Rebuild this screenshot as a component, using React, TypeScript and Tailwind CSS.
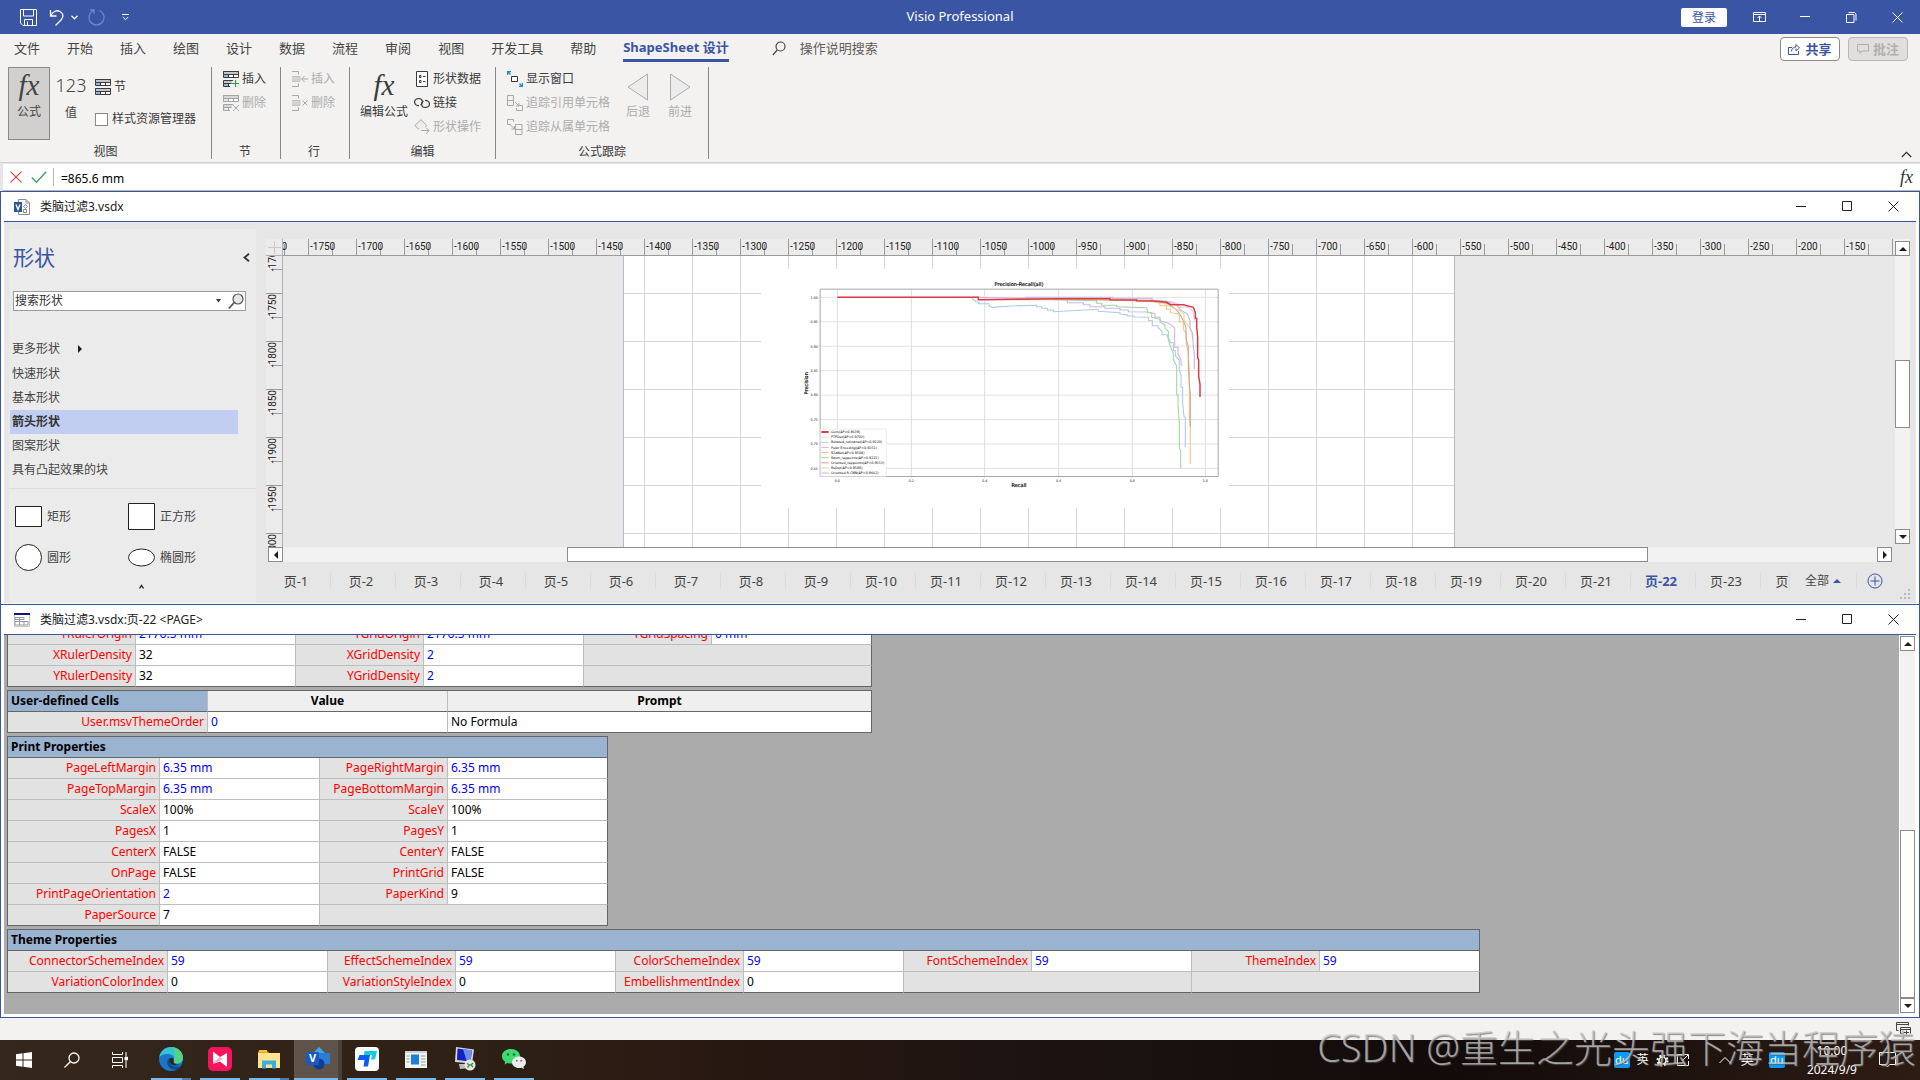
import type { ReactNode } from "react";

const menuTabs = ["文件", "开始", "插入", "绘图", "设计", "数据", "流程", "审阅", "视图", "开发工具", "帮助"];

const stencils = ["快速形状", "基本形状", "箭头形状", "图案形状", "具有凸起效果的块"];

const pages = Array.from({ length: 23 }, (_, i) => `页-${i + 1}`);

const rulerX = Array.from({ length: 34 }, (_, i) => -1800 + i * 50);
const rulerY = [-1700, -1750, -1800, -1850, -1900, -1950, -2000];

type Cell = { name: string; value: string; blue?: boolean } | null;

const rulerGrid: Cell[][] = [
  [
    { name: "YRulerOrigin", value: "2176.5 mm", blue: true },
    { name: "YGridOrigin", value: "2176.5 mm", blue: true },
    { name: "YGridSpacing", value: "0 mm", blue: true },
  ],
  [{ name: "XRulerDensity", value: "32" }, { name: "XGridDensity", value: "2", blue: true }, null],
  [{ name: "YRulerDensity", value: "32" }, { name: "YGridDensity", value: "2", blue: true }, null],
];

const printProps: Cell[][] = [
  [
    { name: "PageLeftMargin", value: "6.35 mm", blue: true },
    { name: "PageRightMargin", value: "6.35 mm", blue: true },
  ],
  [
    { name: "PageTopMargin", value: "6.35 mm", blue: true },
    { name: "PageBottomMargin", value: "6.35 mm", blue: true },
  ],
  [{ name: "ScaleX", value: "100%" }, { name: "ScaleY", value: "100%" }],
  [{ name: "PagesX", value: "1" }, { name: "PagesY", value: "1" }],
  [{ name: "CenterX", value: "FALSE" }, { name: "CenterY", value: "FALSE" }],
  [{ name: "OnPage", value: "FALSE" }, { name: "PrintGrid", value: "FALSE" }],
  [{ name: "PrintPageOrientation", value: "2", blue: true }, { name: "PaperKind", value: "9" }],
  [{ name: "PaperSource", value: "7" }, null],
];

const themeProps: Cell[][] = [
  [
    { name: "ConnectorSchemeIndex", value: "59", blue: true },
    { name: "EffectSchemeIndex", value: "59", blue: true },
    { name: "ColorSchemeIndex", value: "59", blue: true },
    { name: "FontSchemeIndex", value: "59", blue: true },
    { name: "ThemeIndex", value: "59", blue: true },
  ],
  [
    { name: "VariationColorIndex", value: "0" },
    { name: "VariationStyleIndex", value: "0" },
    { name: "EmbellishmentIndex", value: "0" },
    null,
    null,
  ],
];

/* ---------- icons ---------- */

function CloseIcon({ size = 11, className = "" }: { size?: number; className?: string }) {
  return (
    <svg width={size} height={size} viewBox="0 0 11 11" className={className} fill="none" stroke="currentColor">
      <path d="M.5 .5l10 10M10.5 .5l-10 10" />
    </svg>
  );
}

function SectionIcon({ mark }: { mark?: "add" | "remove" }) {
  const off = mark === "remove";
  const line = off ? "#a3a3a3" : "#3b3b3b";
  const head = off ? "#d6d6d6" : "#c8c6c4";
  const blue = off ? "#e8e8e8" : "#83beec";
  return (
    <svg width="16" height="16" viewBox="0 0 16 16" fill="none" stroke={line}>
      <path d="M.5 .5h15v6H.5z" fill="#fff" />
      <path d="M.5 .5h15v3H.5z" fill={head} />
      <path d="M1 4h4v2H1z" fill={blue} stroke="none" />
      <path d="M5.500 4v2.500M10.500 4v2.500" />
      {mark ? (
        <>
          <path d="M10 9.500H.5v3h8M.5 12.500v3H7M5.500 12.500v3" />
          <path d="M1 10h8v2H1z" fill={head} stroke="none" />
          <path d="M1 13h4v2H1z" fill={blue} stroke="none" />
        </>
      ) : (
        <>
          <path d="M.5 9.500h15v6H.5z" fill="#fff" />
          <path d="M.5 9.500h15v3H.5z" fill={head} />
          <path d="M1 13h4v2H1z" fill={blue} stroke="none" />
          <path d="M5.500 13v2.500M10.500 13v2.500" />
        </>
      )}
      {mark === "add" && <path d="M12.500 9v7M9 12.500h7" stroke="#2f9e4f" strokeWidth="1.200" />}
      {mark === "remove" && <path d="M10 10l6 6M16 10l-6 6" stroke="#a8a8a8" />}
    </svg>
  );
}

function RowIcon({ remove }: { remove?: boolean }) {
  return (
    <svg width="16" height="16" viewBox="0 0 16 16" fill="none" stroke="#a8a8a8">
      <path d="M0 .5h6.500v3M0 15.500h6.500v-3M0 8H8" />
      <path d="M0 5.500h8v5H0" fill="#d4d4d4" stroke="#c2c2c2" />
      {remove ? <path d="M10.500 5.500l5 5M15.500 5.500l-5 5" /> : <path d="M16 8h-6M12.500 5L9.500 8l3 3" />}
    </svg>
  );
}

function ShapeDataIcon() {
  return (
    <svg width="16" height="16" viewBox="0 0 16 16" fill="none" stroke="#3b3b3b">
      <path d="M2.500 .5h11v15h-11z" fill="#fff" />
      <path d="M5.500 4.500h1.500v2H5.500zM5.500 9.500h1.500v2H5.500zM9 5.500h2.500M9 10.500h2.500" />
    </svg>
  );
}

function LinkIcon() {
  return (
    <svg width="16" height="12" viewBox="0 0 16 12" fill="none" stroke="#3b3b3b" strokeWidth="1.200">
      <path d="M5 8.500A4 3.500 0 1 1 8.500 4.500c0 2-1 3-2 3.500" />
      <path d="M11 3.500A4 3.500 0 1 1 7.500 7.500c0-2 1-3 2-3.500" />
    </svg>
  );
}

function ShapeOpIcon() {
  return (
    <svg width="16" height="16" viewBox="0 0 16 16" fill="none" stroke="#a8a8a8">
      <path d="M5 10.500L.8 6.500l6-5.800 6 5.800-1.500 1.500" fill="#ececec" />
      <path d="M7 11.500h8M12 8.500l3 3-3 3.500" />
    </svg>
  );
}

function TraceWindowIcon() {
  return (
    <svg width="16" height="16" viewBox="0 0 16 16" fill="none">
      <path d="M4.500 5.500h6v5h-6z" fill="#fff" stroke="#333" />
      <path d="M.5 4V.5H4M.5 .5l3 3M15.500 12v3.500H12M15.500 15.500l-3-3" stroke="#1e8ad0" strokeWidth="1.300" />
    </svg>
  );
}

function TraceIcon({ dependents }: { dependents?: boolean }) {
  return (
    <svg width="16" height="16" viewBox="0 0 16 16" fill="none" stroke="#a8a8a8">
      {dependents ? (
        <path d="M4 5.500H.5v-5h6V3M8.500 5.500h6.500v10H8.500zM8.500 10.500H15M3.500 6l4 4M7.500 7v3h-3" />
      ) : (
        <path d="M.5 .5h6v10h-6zM.5 5.500h6M12 10.500h3.500v5h-6V13M8 7l4 4M12 8v3H9" />
      )}
    </svg>
  );
}

function Caret({ dir, color = "#1e1e1e" }: { dir: "up" | "down" | "left" | "right"; color?: string }) {
  const d = {
    up: "M0 6h8L4 2z",
    down: "M0 2h8L4 6z",
    left: "M6 0v8L2 4z",
    right: "M2 0v8l4-4z",
  }[dir];
  return (
    <svg width="8" height="8" viewBox="0 0 8 8">
      <path d={d} fill={color} />
    </svg>
  );
}

/* ---------- ribbon ---------- */

function SmallButton({ icon, label, disabled }: { icon: ReactNode; label: string; disabled?: boolean }) {
  return (
    <button disabled={disabled} className="flex h-6 items-center gap-[3px] text-xs text-[#3b3b3b] disabled:text-[#acacac]">
      <span className="flex w-4 justify-center">{icon}</span>
      <span>{label}</span>
    </button>
  );
}

function RibbonGroup({ title, className, children }: { title: string; className: string; children: ReactNode }) {
  return (
    <section className={`flex h-[92px] flex-col border-r border-[#8a8886] ${className}`}>
      <div className="flex flex-1 items-start">{children}</div>
      <h2 className="text-center text-xs leading-[15px] text-[#3b3b3b]">{title}</h2>
    </section>
  );
}

function TitleBar() {
  return (
    <header className="flex h-[34px] items-center bg-[#3955a3] text-white">
      <div className="flex flex-1 items-center pl-5">
        <button aria-label="保存">
          <svg width="17" height="17" viewBox="0 0 17 17" fill="none" stroke="#fff">
            <path d="M.5 .5h16v16H3l-2.500-2.500zM3.500 .5v6.500h10V.5M4.500 16.500v-6h8v6M7.500 16v-3.500" />
          </svg>
        </button>
        <button aria-label="撤消" className="ml-3 flex items-center gap-1.5">
          <svg width="16" height="17" viewBox="0 0 16 17" fill="none" stroke="#fff" strokeWidth="1.300">
            <path d="M1.500 1v6h6M1.500 7C4 2 8 .8 11 2.500s4 5 1.500 8L6.500 16.500" />
          </svg>
          <svg width="7" height="5" viewBox="0 0 7 5" fill="none" stroke="#fff" strokeWidth="1.300">
            <path d="M.5 .8l3 3 3-3" />
          </svg>
        </button>
        <button aria-label="恢复" disabled className="ml-[10px]">
          <svg width="17" height="17" viewBox="0 0 17 17" fill="none" stroke="#6f86c9" strokeWidth="1.300">
            <path d="M2 1h4v4M5.500 1.500a7.500 7.500 0 1 0 6 0" />
          </svg>
        </button>
        <button aria-label="自定义快速访问工具栏" className="ml-[17px]">
          <svg width="7" height="7" viewBox="0 0 7 7" fill="none" stroke="#fff">
            <path d="M0 .5h7M.8 3l2.700 2.700L6.200 3" />
          </svg>
        </button>
      </div>
      <h1 className="mr-5 text-[13px]">Visio Professional</h1>
      <div className="flex flex-1 items-center justify-end">
        <button className="mr-[9px] h-[19px] w-[46px] rounded-xs bg-white text-xs leading-[19px] text-[#3955a3]">登录</button>
        <button aria-label="功能区显示选项" className="flex w-[46px] justify-center">
          <svg width="13" height="10" viewBox="0 0 13 10" fill="none" stroke="#fff">
            <path d="M.5 .5h12v9H.5zM.5 2.500h12M6.500 9V4M4.500 6l2-2 2 2" />
          </svg>
        </button>
        <button aria-label="最小化" className="flex w-[46px] justify-center">
          <svg width="10" height="2" viewBox="0 0 10 2">
            <path d="M0 0h10v1H0z" fill="#fff" />
          </svg>
        </button>
        <button aria-label="还原" className="flex w-[46px] justify-center">
          <svg width="11" height="11" viewBox="0 0 11 11" fill="none" stroke="#fff">
            <path d="M.5 2.500h7.500v8H.5zM2.500 .5h6l1.500 1.500v6.500" />
          </svg>
        </button>
        <button aria-label="关闭" className="flex w-[46px] justify-center">
          <CloseIcon />
        </button>
      </div>
    </header>
  );
}

function Ribbon() {
  return (
    <div className="border-b border-[#d2d0ce] bg-[#f3f2f1]">
      <nav className="flex h-[33px] items-start pl-[14px] pr-3 text-[13px] leading-[27px] text-[#444]">
        <div className="flex gap-[27px]">
          {menuTabs.map((tab) => (
            <button key={tab}>{tab}</button>
          ))}
          <button className="h-7 border-b-3 border-[#3955a3] font-bold text-[#3955a3]">ShapeSheet 设计</button>
        </div>
        <label className="ml-[43px] flex items-center gap-[14px] pt-px">
          <svg width="14" height="15" viewBox="0 0 14 15" fill="none" stroke="#444" strokeWidth="1.200">
            <circle cx="8.500" cy="5.500" r="4.500" />
            <path d="M5.200 9L.8 14" />
          </svg>
          <input className="w-40 placeholder:text-[#605e5c]" placeholder="操作说明搜索" />
        </label>
        <div className="ml-auto flex gap-2 pt-[3px] font-bold">
          <button className="flex h-6 w-[60px] items-center justify-center gap-1 rounded-sm border border-[#8a8886] bg-white text-[#3955a3]">
            <svg width="13" height="12" viewBox="0 0 13 12" fill="none" stroke="#3955a3">
              <path d="M4 4.500H.5v7h10V8M3.500 8.500c0-3 2-4.500 4.500-4.500V1.500L11.500 5 8 8V5.500" />
            </svg>
            共享
          </button>
          <button disabled className="flex h-6 w-[60px] items-center justify-center gap-1 rounded-sm border border-[#b9b7b5] bg-[#e1dfdd] text-[#b1afad]">
            <svg width="12" height="10" viewBox="0 0 12 10" fill="none" stroke="#b1afad">
              <path d="M.5 .5h11v6.500H5L3 9.500V7H.5z" />
            </svg>
            批注
          </button>
        </div>
      </nav>

      <div className="flex h-[95px] items-start">
        <RibbonGroup title="视图" className="w-[212px]">
          <button className="ml-2 flex h-[73px] w-[42px] flex-col items-center border border-[#8a8886] bg-[#d2d0ce] text-xs text-[#444]">
            <span className="h-9 font-['Liberation_Serif',serif] text-[29px] leading-[34px] italic">fx</span>
            <span className="leading-4">公式</span>
          </button>
          <button className="ml-[3px] flex w-9 flex-col items-center text-xs text-[#444]">
            <span className="h-9 text-lg leading-9 font-light">123</span>
            <span className="leading-5">值</span>
          </button>
          <div className="ml-[6px] flex flex-col pt-1">
            <button className="flex h-8 items-center gap-[3px] text-xs text-[#3b3b3b]">
              <SectionIcon />
              节
            </button>
            <label className="flex h-8 items-center gap-1 text-xs text-[#3b3b3b]">
              <input type="checkbox" className="size-[13px] appearance-none border border-[#8a8886] bg-white" />
              样式资源管理器
            </label>
          </div>
        </RibbonGroup>
        <RibbonGroup title="节" className="w-[69px] pl-[11px] pr-[13px]">
          <div>
            <SmallButton icon={<SectionIcon mark="add" />} label="插入" />
            <SmallButton icon={<SectionIcon mark="remove" />} label="删除" disabled />
          </div>
        </RibbonGroup>
        <RibbonGroup title="行" className="w-[69px] pl-[11px] pr-[13px]">
          <div>
            <SmallButton icon={<RowIcon />} label="插入" disabled />
            <SmallButton icon={<RowIcon remove />} label="删除" disabled />
          </div>
        </RibbonGroup>
        <RibbonGroup title="编辑" className="w-[146px]">
          <button className="ml-[9px] flex w-[50px] flex-col items-center text-xs text-[#3b3b3b]">
            <span className="h-9 font-['Liberation_Serif',serif] text-[29px] leading-9 italic">fx</span>
            <span className="leading-[18px]">编辑公式</span>
          </button>
          <div className="ml-[5px]">
            <SmallButton icon={<ShapeDataIcon />} label="形状数据" />
            <SmallButton icon={<LinkIcon />} label="链接" />
            <SmallButton icon={<ShapeOpIcon />} label="形状操作" disabled />
          </div>
        </RibbonGroup>
        <RibbonGroup title="公式跟踪" className="w-[213px]">
          <div className="ml-[11px]">
            <SmallButton icon={<TraceWindowIcon />} label="显示窗口" />
            <SmallButton icon={<TraceIcon />} label="追踪引用单元格" disabled />
            <SmallButton icon={<TraceIcon dependents />} label="追踪从属单元格" disabled />
          </div>
          <button disabled className="ml-[10px] flex w-9 flex-col items-center text-xs text-[#acacac]">
            <svg width="22" height="28" viewBox="0 0 22 28" className="mt-[6px]">
              <path d="M20.500 1v26L1 14z" fill="#ececec" stroke="#acacac" />
            </svg>
            <span className="leading-[22px]">后退</span>
          </button>
          <button disabled className="ml-[6px] flex w-9 flex-col items-center text-xs text-[#acacac]">
            <svg width="22" height="28" viewBox="0 0 22 28" className="mt-[6px]">
              <path d="M1.500 1v26L21 14z" fill="#ececec" stroke="#acacac" />
            </svg>
            <span className="leading-[22px]">前进</span>
          </button>
        </RibbonGroup>
        <button aria-label="折叠功能区" className="ml-auto mr-2 self-end pb-1">
          <svg width="11" height="7" viewBox="0 0 11 7" fill="none" stroke="#333" strokeWidth="1.300">
            <path d="M.8 6l4.700-4.700L10.200 6" />
          </svg>
        </button>
      </div>
    </div>
  );
}

function FormulaBar() {
  return (
    <div className="flex h-[28px] bg-[#e6e6e6] pt-px pl-[3px]">
      <div className="flex flex-1 items-center border-b border-[#b5b5b5] bg-white pl-[7px]">
        <button aria-label="取消">
          <CloseIcon size={12} className="text-[#e03c3c]" />
        </button>
        <button aria-label="输入" className="ml-[9px]">
          <svg width="16" height="12" viewBox="0 0 16 12" fill="none" stroke="#3f9b57" strokeWidth="1.300">
            <path d="M.8 6.500l4.700 4.700L15.200 .8" />
          </svg>
        </button>
        <input
          aria-label="公式"
          defaultValue="=865.6 mm"
          className="ml-[6px] h-[18px] flex-1 border-l border-[#b5b5b5] pt-[2px] pl-[7px] text-xs text-black outline-none"
        />
        <button aria-label="插入函数" className="pr-[7px] font-['Liberation_Serif',serif] text-lg leading-5 text-[#333] italic">
          fx
        </button>
      </div>
    </div>
  );
}

/* ---------- windows ---------- */

function WindowBar({ icon, title }: { icon: ReactNode; title: string }) {
  return (
    <div className="flex h-[30px] shrink-0 items-center border-b border-[#3955a3] bg-white pl-[10px]">
      {icon}
      <h2 className="ml-[10px] text-xs text-[#222]">{title}</h2>
      <div className="ml-auto flex text-[#222]">
        <button aria-label="最小化" className="flex w-[46px] items-center justify-center">
          <svg width="10" height="2" viewBox="0 0 10 2">
            <path d="M0 0h10v1H0z" fill="#222" />
          </svg>
        </button>
        <button aria-label="最大化" className="flex w-[46px] justify-center">
          <svg width="10" height="10" viewBox="0 0 10 10" fill="none" stroke="#222">
            <path d="M.5 .5h9v9h-9z" />
          </svg>
        </button>
        <button aria-label="关闭" className="flex w-[46px] justify-center">
          <CloseIcon />
        </button>
      </div>
    </div>
  );
}

function ScrollButton({ dir }: { dir: "up" | "down" | "left" | "right" }) {
  return (
    <button aria-label={dir} className="flex size-[15px] shrink-0 items-center justify-center border border-[#8c8c8c] bg-white">
      <Caret dir={dir} />
    </button>
  );
}

function ShapesPane() {
  return (
    <aside className="mt-[7px] flex w-[247px] shrink-0 flex-col bg-[#ebebeb] text-xs text-[#444]">
      <div className="flex items-center justify-between pt-[14px] pr-[6px] pl-1">
        <h3 className="text-[21px] leading-7 text-[#3955a3]">形状</h3>
        <button aria-label="最小化形状窗口">
          <svg width="7" height="9" viewBox="0 0 7 9" fill="none" stroke="#333" strokeWidth="1.800">
            <path d="M6 .8L1.500 4.500 6 8.200" />
          </svg>
        </button>
      </div>
      <div className="mt-5 ml-1 flex h-5 w-[233px] items-center border border-[#9b9b9b] bg-white pr-px">
        <input aria-label="搜索形状" defaultValue="搜索形状" className="min-w-0 flex-1 pl-px leading-[18px] text-[#333] outline-none" />
        <svg width="5" height="4" viewBox="0 0 5 4" className="mr-[7px]">
          <path d="M0 0h5L2.500 3.500z" fill="#333" />
        </svg>
        <button aria-label="搜索">
          <svg width="16" height="17" viewBox="0 0 16 17" fill="none" stroke="#555">
            <circle cx="10" cy="6" r="5" fill="#e6e6e6" strokeWidth="1.200" />
            <path d="M6.300 9.500L.8 15.500" strokeWidth="1.800" />
          </svg>
        </button>
      </div>
      <button className="mt-[26px] flex h-6 items-center gap-4 pl-[3px]">
        更多形状
        <Caret dir="right" />
      </button>
      <ul className="mt-px">
        {stencils.map((s) => (
          <li key={s}>
            <button
              className={
                s === "箭头形状"
                  ? "ml-px flex h-6 w-[228px] items-center bg-[#c1cdf1] pl-[2px] font-bold text-[#333]"
                  : "flex h-6 items-center pl-[3px]"
              }
            >
              {s}
            </button>
          </li>
        ))}
      </ul>
      <div className="mt-[6px] grid grid-cols-[113px_1fr] gap-y-3 border-t border-[#dcdcdc] pt-[13px] pl-[6px]">
        <button className="flex h-[29px] items-center gap-[5px]">
          <svg width="27" height="27" viewBox="0 0 27 27" fill="#fff" stroke="#222">
            <path d="M.5 3.500h26v20H.5z" />
          </svg>
          矩形
        </button>
        <button className="flex h-[29px] items-center gap-[5px]">
          <svg width="27" height="27" viewBox="0 0 27 27" fill="#fff" stroke="#222">
            <path d="M.5 .5h26v26H.5z" />
          </svg>
          正方形
        </button>
        <button className="flex h-[29px] items-center gap-[5px]">
          <svg width="27" height="27" viewBox="0 0 27 27" fill="#fff" stroke="#222">
            <circle cx="13.500" cy="13.500" r="13" />
          </svg>
          圆形
        </button>
        <button className="flex h-[29px] items-center gap-[5px]">
          <svg width="27" height="27" viewBox="0 0 27 27" fill="#fff" stroke="#222">
            <ellipse cx="13.500" cy="13.500" rx="13" ry="8.500" />
          </svg>
          椭圆形
        </button>
      </div>
      <svg width="5" height="5" viewBox="0 0 5 5" className="mt-3 ml-[130px]" fill="none" stroke="#222" strokeWidth="1.300">
        <path d="M.5 4.500l2-3 2 3" />
      </svg>
    </aside>
  );
}

const curves = [
  { color: "#f3c9ee", d: "M172 112H600L840 114 1000 115 1060 118 1120 118V121L1180 126 1200 134V142H1225L1240 155V170L1246 185" },
  {
    color: "#a9cde6",
    d: "M578 112V118L586 122V126H596V131H627V137L636 142L690 138 770 136V140H785V145H802V150H820V155L900 151 955 148V154L1020 158V162L1042 164V168H1062V171L1106 172V182H1117V197H1134V203L1146 214V224H1162V230L1170 242V248H1180V272H1186V288L1198 300V330L1203 345V382H1208V430L1212 470 1216 472V560",
  },
  {
    color: "#cdb5e2",
    d: "M578 112L820 117 862 119V128H910V134H930V140H975V145H1020V150H1045V155L1104 156 1125 162V172H1140V182L1165 190 1180 200 1184 206V262H1194V282L1203 300V312L1207 318",
  },
  {
    color: "#f7c18b",
    d: "M597 119L990 119 1110 124 1140 130V137H1160V148H1172V158L1198 162V185H1210V207L1219 222V250L1224 275 1228 330V470L1231 500V612",
  },
  {
    color: "#a2d6a0",
    d: "M820 116V119L950 122V130H965V136H1010V140L1100 143 1104 158H1115V172L1140 178V185L1155 195V205L1165 214V240L1173 265 1180 280V300L1190 318V405H1194V435L1198 490V565L1202 570V625",
  },
  { color: "#cba698", d: "M840 117L1130 124 1165 132 1185 146 1198 160 1212 185 1218 205V235L1225 260V320L1228 375 1231 400V500" },
  { color: "#dcdc8f", d: "M840 116L1110 121 1150 130 1180 144 1200 152 1212 162V182L1225 195 1235 215 1238 238" },
  { color: "#c6b2e0", d: "M734 112H998V115H1116V121L1160 124 1190 134 1200 148 1222 162 1230 182V205L1238 220 1240 260 1243 280V328" },
  {
    color: "#dd3b41",
    width: 4.5,
    d: "M172 112H595V119L700 118 840 116H990V119L1070 120V122L1120 123 1160 127 1172 134 1210 134 1240 142 1246 158V175H1250V202L1253 230V292L1256 300V350L1260 372V411",
  },
];

const legend = [
  ["#dd3b41", "Ours(AP=0.9639)"],
  ["#f3c9ee", "PTPDet(AP=0.9702)"],
  ["#a9cde6", "Rotated_retinanet(AP=0.9120)"],
  ["#cdb5e2", "Polar Encoding(AP=0.9251)"],
  ["#f7c18b", "S2aNet(AP=0.9508)"],
  ["#a2d6a0", "Sasm_reppoints(AP=0.9215)"],
  ["#cba698", "Oriented_reppoints(AP=0.9553)"],
  ["#dcdc8f", "ReDet(AP=0.9588)"],
  ["#c6b2e0", "Oriented R-CNN(AP=0.9662)"],
];

function PrecisionRecallChart() {
  return (
    <svg viewBox="-57 27 1404 717" className="w-full bg-white font-['DejaVu_Sans',sans-serif]" fill="none">
      {[172, 394, 614, 836, 1057, 1276].map((x, i) => (
        <g key={x}>
          <path d={`M${x} 87V655`} stroke="#cfcfcf" strokeWidth="2" />
          <text x={x} y="665" fontSize="10" textAnchor="middle" fill="#111">
            {(i * 0.2).toFixed(1)}
          </text>
        </g>
      ))}
      {["1.00", "0.95", "0.90", "0.85", "0.80", "0.75", "0.70", "0.65"].map((t, i) => (
        <g key={t}>
          <path d={`M116 ${112 + i * 73.3}H1314`} stroke="#dcdcdc" strokeWidth="2.500" />
          <text x="114" y={116 + i * 73.3} fontSize="10" textAnchor="end" fill="#111">
            {t}
          </text>
        </g>
      ))}
      <path d="M120.500 87.500h1194v562h-1194z" stroke="#a8a8a8" strokeWidth="3" />
      {curves.map((c) => (
        <path key={c.d} d={c.d} stroke={c.color} strokeWidth={c.width ?? 3.2} />
      ))}
      <path d="M122 507h197v142H122z" fill="#fff" stroke="#e2e2e2" strokeWidth="2" />
      {legend.map(([color, label], i) => (
        <g key={label}>
          <path d={`M124 ${516 + i * 15.4}h22`} stroke={color} strokeWidth={i === 0 ? 6 : 3} />
          <text x="153" y={519.500 + i * 15.4} fontSize="10" fill="#000">
            {label}
          </text>
        </g>
      ))}
      <text x="717" y="79" fontSize="15" textAnchor="middle" fill="#000" stroke="#000" strokeWidth=".5">
        Precision-Recall(all)
      </text>
      <text x="717" y="682" fontSize="15" textAnchor="middle" fill="#000" stroke="#000" strokeWidth=".5">
        Recall
      </text>
      <text x="85" y="370" fontSize="15" textAnchor="middle" fill="#000" stroke="#000" strokeWidth=".5" transform="rotate(-90 85 370)">
        Precision
      </text>
    </svg>
  );
}

function DrawingArea() {
  return (
    <div className="flex min-w-0 flex-1 flex-col">
      <div className="flex pt-[17px]">
        <div className="grid min-w-0 flex-1 grid-cols-[17px_1fr] grid-rows-[17px_291px] font-[Roboto,sans-serif] text-[10px] text-[#222]">
          <div className="flex items-center justify-center border-r border-b border-[#b0b0b0] bg-[#ebebeb]">
            <svg width="13" height="13" viewBox="0 0 13 13" stroke="#c8c8c8">
              <path d="M6.500 0v13M0 6.500h13" />
            </svg>
          </div>
          <div className="overflow-hidden border-b border-[#9a9a9a] bg-[#ebebeb]">
            <div className="-ml-[23px] flex h-4">
              {rulerX.map((n) => (
                <div key={n} className="relative flex w-12 shrink-0 items-end border-l border-[#9a9a9a]">
                  <span className="ml-[23px] h-[11px] border-l border-[#9a9a9a]" />
                  <span className="absolute top-px left-px leading-[14px]">{n}</span>
                </div>
              ))}
              <div className="shrink-0 border-l border-[#9a9a9a]" />
            </div>
          </div>
          <div className="overflow-hidden border-r border-[#b0b0b0] bg-[#ebebeb]">
            <div className="-mt-[11px]">
              {rulerY.map((n) => (
                <div key={n} className="relative flex h-12 items-center justify-end border-t border-[#9a9a9a]">
                  <span className="w-[11px] border-t border-[#9a9a9a]" />
                  <span className="absolute top-0 left-0 rotate-180 leading-[13px] [writing-mode:vertical-rl]">{n}</span>
                </div>
              ))}
            </div>
          </div>
          {/* drawing canvas: one page with its grid and the pasted chart */}
          <div className="relative overflow-hidden bg-[#e8e8e8]">
            <div className="absolute left-[340px] h-full w-[832px] border-x border-[#b4b8c4] bg-white bg-[linear-gradient(to_right,#d6d6d6_1px,transparent_1px),linear-gradient(to_bottom,#d6d6d6_1px,transparent_1px)] bg-size-[48px_48px] bg-position-[20px_37px]">
              <div className="absolute top-[13px] left-[137px] w-[468px]">
                <PrecisionRecallChart />
              </div>
            </div>
          </div>
        </div>
        <div className="mr-[6px] mb-[3px] flex w-[15px] flex-col bg-[#f2f2f2] pt-[2px]">
          <ScrollButton dir="up" />
          <div className="mt-[104px] h-[68px] border border-[#8c8c8c] bg-white" />
          <div className="flex-1" />
          <ScrollButton dir="down" />
        </div>
      </div>
      <div className="mr-[24px] ml-[2px] flex bg-[#f2f2f2]">
        <ScrollButton dir="left" />
        <div className="ml-[284px] h-[15px] w-[1081px] border border-[#8c8c8c] bg-white" />
        <div className="flex-1" />
        <ScrollButton dir="right" />
      </div>
      <div className="mt-[11px] flex h-4 text-[13px] leading-4 text-[#444]">
        {pages.map((p) => (
          <button
            key={p}
            className={
              p === "页-22"
                ? "w-[65px] shrink-0 border-r border-[#dadada] pr-1 font-bold text-[#3955a3]"
                : "w-[65px] shrink-0 border-r border-[#dadada] pr-1"
            }
          >
            {p}
          </button>
        ))}
        <button className="w-[29px] shrink-0 border-r border-[#dadada] pl-[14px]">页</button>
        <button className="flex w-[67px] items-center justify-center gap-1 border-r border-[#dadada] text-xs">
          全部
          <Caret dir="up" color="#3955a3" />
        </button>
        <button aria-label="插入页" className="ml-[10px]">
          <svg width="16" height="16" viewBox="0 0 16 16" fill="none" stroke="#3955a3">
            <circle cx="8" cy="8" r="7" />
            <path d="M8 3.500v9M3.500 8h9" />
          </svg>
        </button>
      </div>
      <svg width="12" height="12" viewBox="0 0 12 12" fill="#b4b8c4" className="mt-auto mr-[5px] mb-[2px] ml-auto">
        <path d="M9 0h2v2H9zM9 4h2v2H9zM5 4h2v2H5zM9 8h2v2H9zM5 8h2v2H5zM1 8h2v2H1z" />
      </svg>
    </div>
  );
}

/* ---------- ShapeSheet ---------- */

const tableClass =
  "table-fixed border-separate border-spacing-0 border-t border-l border-[#666] bg-white [&_td]:h-[21px] [&_td]:border-r [&_td]:border-b [&_td]:border-[#bdbdbd] [&_td]:p-0 [&_th]:h-[21px] [&_th]:border-r [&_th]:border-b [&_th]:border-[#bdbdbd] [&_th]:p-0 [&_tr:last-child>*]:border-b-[#666] [&_tr>*:last-child]:border-r-[#666]";

function CellTable({ title, rows, firstCol }: { title?: string; rows: Cell[][]; firstCol: string }) {
  const groups = rows[0].length;
  return (
    <table className={`w-px ${tableClass}`}>
      <colgroup>
        {rows[0].flatMap((_, i) => [
          <col key={`n${i}`} className={i === 0 ? firstCol : "w-[128px]"} />,
          <col key={`v${i}`} className="w-[160px]" />,
        ])}
      </colgroup>
      {title && (
        <thead>
          <tr>
            <th colSpan={groups * 2} className="bg-[#99b3d1] text-left">
              <span className="pl-[3px]">{title}</span>
            </th>
          </tr>
        </thead>
      )}
      <tbody>
        {rows.map((row, r) => (
          <tr key={r}>
            {row.flatMap((cell, c) =>
              cell
                ? [
                    <td key={cell.name} className="bg-[#e2e2e2] text-right text-[#f00]">
                      <span className="pr-[3px]">{cell.name}</span>
                    </td>,
                    <td key={`${cell.name}-v`} className={cell.blue ? "text-[#00f]" : "text-black"}>
                      <span className="pl-[3px]">{cell.value}</span>
                    </td>,
                  ]
                : [<td key={`blank${c}`} colSpan={2} className="bg-[#e2e2e2]" />],
            )}
          </tr>
        ))}
      </tbody>
    </table>
  );
}

function ShapeSheet() {
  return (
    <div className="flex min-h-0 flex-1">
      <div className="flex flex-1 flex-col items-start justify-end gap-[3px] overflow-hidden bg-[#ababab] pb-[21px] pl-[3px] text-xs leading-5 whitespace-nowrap">
        <CellTable rows={rulerGrid} firstCol="w-[128px]" />
        <table className={`w-px ${tableClass}`}>
          <colgroup>
            <col className="w-[200px]" />
            <col className="w-[240px]" />
            <col className="w-[424px]" />
          </colgroup>
          <thead>
            <tr>
              <th className="bg-[#99b3d1] text-left">
                <span className="pl-[3px]">User-defined Cells</span>
              </th>
              <th className="bg-[#efefef]">Value</th>
              <th className="bg-[#efefef]">Prompt</th>
            </tr>
          </thead>
          <tbody>
            <tr>
              <td className="bg-[#e2e2e2] text-right text-[#f00]">
                <span className="pr-[3px]">User.msvThemeOrder</span>
              </td>
              <td className="text-[#00f]">
                <span className="pl-[3px]">0</span>
              </td>
              <td className="text-black">
                <span className="pl-[3px]">No Formula</span>
              </td>
            </tr>
          </tbody>
        </table>
        <CellTable title="Print Properties" rows={printProps} firstCol="w-[152px]" />
        <CellTable title="Theme Properties" rows={themeProps} firstCol="w-[160px]" />
      </div>
      <div className="mr-px flex w-4 flex-col items-center border-l border-white bg-[#f2f2f2] py-px">
        <ScrollButton dir="up" />
        <div className="flex-1" />
        <div className="h-[168px] w-[15px] border border-[#8c8c8c] bg-white" />
        <ScrollButton dir="down" />
      </div>
    </div>
  );
}

/* ---------- taskbar ---------- */

const apps: { name: string; state: "run" | "multi" | "active"; icon: ReactNode }[] = [
  {
    name: "Edge",
    state: "multi",
    icon: (
      <svg width="24" height="24" viewBox="0 0 24 24">
        <circle cx="12" cy="12" r="12" fill="#1976c9" />
        <path d="M.3 10C1.500 4 6 0 12 0c7 0 12 5 12 10.500 0 4-3 6-6 6-2.500 0-4-1-3.500-2 1.500-2 1-6-3-7C7 6.500 3 7.500.3 10z" fill="#35c1d6" />
        <path d="M14 .3C20 1.500 24 6 24 10.500c0 4-3 6-6 6-2.500 0-4-1-3.500-2 2-3 1.500-8-.5-14.200z" fill="#5cd86a" opacity=".75" />
        <path d="M9 12c-2 4 0 9 5 10.500 3 .5 6-.5 8-3.500-5 2-11 0-11.500-4-.2-1.500 0-2.500.5-3.500z" fill="#0c4a94" />
        <path d="M10.800 11.500c-1 2-.5 4 1.200 5.500 2 1.600 6 2 9.500.8-2.500.3-6.500-.6-7-2.800.6-1.800 0-4-1.700-4-.8 0-1.500 0-2 .5z" fill="#33241a" />
      </svg>
    ),
  },
  {
    name: "Media",
    state: "run",
    icon: (
      <svg width="24" height="24" viewBox="0 0 24 24">
        <rect width="24" height="24" rx="5" fill="#f5145d" />
        <path d="M5 4.500l7 5.500 7-4v14l-7-5.500L5 17z" fill="#fff" />
        <path d="M12 10L5 15.500V17l10-5z" fill="#f9a8c4" />
      </svg>
    ),
  },
  {
    name: "文件资源管理器",
    state: "multi",
    icon: (
      <svg width="22" height="19" viewBox="0 0 22 19">
        <path d="M0 1.500h10L11 3H0z" fill="#f0a30a" />
        <path d="M1 0h8v2H1z" fill="#f7c244" />
        <path d="M0 3h22v15H0z" fill="#ffe48f" />
        <path d="M4 18.500v-8h14v8h-4v-4H8v4z" fill="#39ace0" />
      </svg>
    ),
  },
  {
    name: "Visio",
    state: "active",
    icon: (
      <svg width="24" height="24" viewBox="0 0 24 24">
        <path d="M13 0l7 7-7 7-7-7z" fill="#41a5ee" />
        <path d="M13 6h11v11H13z" fill="#2b7cd3" />
        <circle cx="13" cy="17" r="5.500" fill="#103f91" />
        <rect y="5" width="13" height="13" rx="1" fill="#185abd" />
        <text x="6.500" y="15.300" fontSize="11" fontWeight="700" fill="#fff" textAnchor="middle">
          V
        </text>
      </svg>
    ),
  },
  {
    name: "ToDesk",
    state: "run",
    icon: (
      <svg width="24" height="24" viewBox="0 0 24 24">
        <rect width="24" height="24" rx="4" fill="#fff" />
        <path d="M9.500 4H22l-2 8.500h-4L17 8H9z" fill="#12cbe0" />
        <path d="M4.500 8H15l-2 11.500H8.500l1-6.500H2.500z" fill="#0a5cf5" />
      </svg>
    ),
  },
  {
    name: "Viewer",
    state: "run",
    icon: (
      <svg width="22" height="17" viewBox="0 0 22 17">
        <path d="M0 0h22v17H0z" fill="#f2f2f2" />
        <path d="M0 0h22v2H0z" fill="#cfcfcf" />
        <path d="M6 3.500h8v10H6z" fill="#1a7fd6" />
        <path d="M1.500 5h3M1.500 8h3M1.500 11h3M16 5h4.500M16 8h4.500M16 11h4.500M16 14h4.500" stroke="#999" />
      </svg>
    ),
  },
  {
    name: "远程",
    state: "run",
    icon: (
      <svg width="24" height="24" viewBox="0 0 24 24">
        <path d="M3 0l18 2.500-2 14L2 15z" fill="#d9d9d9" />
        <path d="M4.500 1.500l14.500 2-1.500 11L4 13z" fill="#1220c4" />
        <path d="M10 1.800l9 1.700-1.500 11-4-.4z" fill="#6f8df0" />
        <path d="M6 17h9l2 4-10 1z" fill="#bdbdbd" />
        <circle cx="17" cy="18" r="5.500" fill="#e6e6e6" />
        <path d="M14 16.500l2.500 1.500-2 2.500M20 16l-2 2 2 2" fill="none" stroke="#2c8f2c" strokeWidth="1.300" />
      </svg>
    ),
  },
  {
    name: "微信",
    state: "run",
    icon: (
      <svg width="24" height="22" viewBox="0 0 24 22">
        <path d="M9 1C4 1 0 4.200 0 8.200c0 2.300 1.300 4.200 3.200 5.500L2.500 16.500l3-1.500c1 .3 2.200.5 3.500.5 5 0 9-3.200 9-7.300S14 1 9 1z" fill="#3ddb72" />
        <circle cx="6" cy="6.500" r="1.200" fill="#17713a" />
        <circle cx="12" cy="6.500" r="1.200" fill="#17713a" />
        <path d="M17 8.500c-4 0-7 2.600-7 5.800s3 5.800 7 5.800c.9 0 1.800-.1 2.600-.4l2.400 1.300-.6-2.300c1.600-1.100 2.600-2.600 2.600-4.400 0-3.200-3-5.800-7-5.800z" fill="#ececec" />
        <circle cx="14.800" cy="12.800" r="1" fill="#777" />
        <circle cx="19.200" cy="12.800" r="1" fill="#777" />
      </svg>
    ),
  },
];

function Taskbar() {
  return (
    <footer className="flex h-10 shrink-0 items-stretch bg-[linear-gradient(to_right,#35271b,#2f2015_25%,#281812_38%,#1c1310_55%,#120b0a_75%,#1c110d_85%,#2d1c14)] text-white">
      <button aria-label="开始" className="flex w-12 items-center justify-center">
        <svg width="16" height="16" viewBox="0 0 16 16" fill="#fff">
          <path d="M0 2.200L6.500 1.300v6.200H0zM7.500 1.200L16 0v7.500H7.500zM0 8.500h6.500v6.200L0 13.800zM7.500 8.500H16V16l-8.500-1.200z" />
        </svg>
      </button>
      <button aria-label="搜索" className="flex w-12 items-center justify-center">
        <svg width="16" height="16" viewBox="0 0 16 16" fill="none" stroke="#fff" strokeWidth="1.300">
          <circle cx="10" cy="6" r="5" />
          <path d="M6.300 9.700L.5 15.500" />
        </svg>
      </button>
      <button aria-label="任务视图" className="flex w-[51px] items-center justify-center pr-[3px]">
        <svg width="16" height="16" viewBox="0 0 16 16" fill="none" stroke="#fff">
          <path d="M.5 0v2.500h10V0M.5 5.500h10v5H.5zM.5 16v-2.500h10V16M14 0v4M14 9v7" />
          <path d="M13 5h2.500v3H13z" fill="#fff" />
        </svg>
      </button>
      {apps.map((app) => (
        <button
          key={app.name}
          aria-label={app.name}
          className={
            app.state === "active"
              ? "mr-px flex w-12 flex-col items-center border-r-4 border-[#4a4038] bg-[#5f534a]"
              : "mr-px flex w-12 flex-col items-center"
          }
        >
          <span className={app.state === "active" ? "flex flex-1 items-center pl-1" : "flex flex-1 items-center"}>{app.icon}</span>
          {app.state === "multi" ? (
            <span className="flex h-[2px] w-10 bg-[#4f7da8]">
              <span className="w-[31px] bg-[#76b9ed]" />
            </span>
          ) : (
            <span className={app.state === "active" ? "h-[2px] w-full bg-[#76b9ed]" : "h-[2px] w-10 bg-[#76b9ed]"} />
          )}
        </button>
      ))}
      <div className="ml-auto flex items-center text-xs">
        <span className="mr-[7px] flex h-4 w-4 items-center justify-center rounded-xs bg-[#0a9bf5] text-[11px]">du</span>
        <span className="mr-[7px]">英</span>
        <svg width="13" height="13" viewBox="0 0 13 13" fill="none" stroke="#fff" className="mr-2">
          <circle cx="6.500" cy="6.500" r="5" strokeWidth="2" strokeDasharray="2 1.930" />
          <circle cx="6.500" cy="6.500" r="3.500" strokeWidth="1.500" />
        </svg>
        <svg width="12" height="12" viewBox="0 0 12 12" fill="none" stroke="#fff" className="mr-[30px]">
          <path d="M5 .5H.5v11h11V7M7 .5h4.500V5M11 1L5 7" />
        </svg>
        <svg width="12" height="8" viewBox="0 0 12 8" fill="none" stroke="#fff" className="mr-[10px]">
          <path d="M.5 7L6 1.500 11.500 7" />
        </svg>
        <span className="mr-[15px] text-[13px]">英</span>
        <span className="mr-[22px] flex h-4 w-4 items-center justify-center rounded-xs bg-[#0a9bf5] text-[11px]">du</span>
        <div className="mr-[22px] text-center leading-[19px]">
          <div>10:00</div>
          <div>2024/9/9</div>
        </div>
        <button aria-label="通知" className="mr-6">
          <svg width="17" height="16" viewBox="0 0 17 16" fill="none" stroke="#fff">
            <path d="M.5 .5h16v12h-6l-2 2.500-2-2.500h-6z" />
          </svg>
        </button>
      </div>
    </footer>
  );
}

export default function App() {
  return (
    <div className="relative flex h-screen flex-col overflow-hidden bg-[#f3f2f1] font-['Noto_Sans','Noto_Sans_CJK_SC',sans-serif]">
      <TitleBar />
      <Ribbon />
      <FormulaBar />

      {/* drawing window */}
      <main className="flex h-[413px] shrink-0 flex-col border border-b-0 border-[#3955a3] bg-white pr-[3px] pl-[3px]">
        <WindowBar
          title="类脑过滤3.vsdx"
          icon={
            <svg width="16" height="16" viewBox="0 0 16 16" fill="none">
              <path d="M4.500 .5H12l3.500 3.500v11.500h-11z" fill="#fff" stroke="#8c8c8c" />
              <path d="M12 .5V4h3.500M9.500 7.500l2-2 2 2-2 2zM9.500 10.500h3v3h-3z" stroke="#8c8c8c" />
              <path d="M0 3h8v10H0z" fill="#2b579a" />
              <path d="M2 5.500L4 10.500 6 5.500" stroke="#fff" strokeWidth="1.300" />
            </svg>
          }
        />
        <div className="mb-[3px] flex flex-1 gap-[10px] bg-[#e6e6e6] pl-[5px]">
          <ShapesPane />
          <DrawingArea />
        </div>
      </main>

      {/* ShapeSheet window */}
      <section className="flex min-h-0 flex-1 flex-col border border-[#3955a3] bg-white px-[3px] pb-[3px]">
        <WindowBar
          title="类脑过滤3.vsdx:页-22 <PAGE>"
          icon={
            <svg width="16" height="14" viewBox="0 0 16 14" fill="none" stroke="#9a9a9a">
              <path d="M.5 1.500h15v12H.5z" fill="#fff" stroke="#c4c4c4" />
              <path d="M0 1h16" stroke="#14148c" strokeWidth="2" />
              <path d="M1 4.500h9v2H1zM1 8.500h13v3.500H1zM5.500 4.500V12M10 8.500V12" />
            </svg>
          }
        />
        <ShapeSheet />
      </section>

      <div className="flex h-[22px] shrink-0 items-center justify-end pr-[9px]">
        <button aria-label="切换窗口">
          <svg width="15" height="14" viewBox="0 0 15 14" fill="none" stroke="#444">
            <path d="M2.500 8.500h-2v-8h12v3M.5 2.500h12M4.500 5.500h10v6M4.500 5.500v6h2M4.500 7.500h10M8 10.500h5M10.500 8.500v5" />
          </svg>
        </button>
      </div>
      <Taskbar />

      <p className="pointer-events-none absolute right-1 bottom-[6px] text-[38px] leading-[54px] font-light whitespace-nowrap text-[#c8c8c8]/75 [text-shadow:1px_1px_1px_rgba(90,90,90,.7)]">
        CSDN @重生之光头强下海当程序猿
      </p>
    </div>
  );
}
